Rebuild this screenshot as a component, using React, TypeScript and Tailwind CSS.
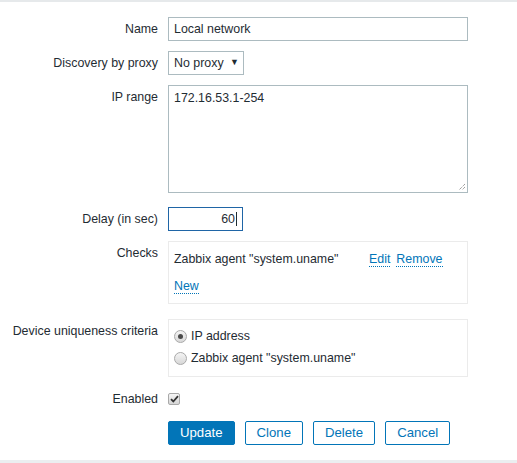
import React from 'react';

const font = { fontFamily: '"Liberation Sans", Arial, Helvetica, sans-serif' };

function Row({ label, children, labelClass = 'pt-[5px]' }: { label: string; children: React.ReactNode; labelClass?: string }) {
  return (
    <div className="flex items-start">
      <div className={`w-[158px] shrink-0 text-right text-[12.4px] leading-[14px] text-[#1f2c33] ${labelClass}`}>{label}</div>
      <div className="ml-[10px] flex-1">{children}</div>
    </div>
  );
}

function Radio({ checked, label }: { checked?: boolean; label: string }) {
  return (
    <div className="flex h-[22px] items-center">
      <span className="flex h-[13px] w-[13px] items-center justify-center rounded-full border border-[#a9a9a9] bg-gradient-to-b from-[#f4f4f4] to-[#d8d8d8]">
        {checked && <span className="h-[5px] w-[5px] rounded-full bg-[#4a4a4a]" />}
      </span>
      <span className="ml-[4px] text-[12.4px] leading-[14px] text-[#1f2c33]">{label}</span>
    </div>
  );
}

function Btn({ label, primary }: { label: string; primary?: boolean }) {
  return (
    <button
      className={
        primary
          ? 'h-[24px] rounded-[2px] border border-[#0275b8] bg-[#0275b8] px-[11px] text-[13.2px] text-white'
          : 'h-[24px] rounded-[2px] border border-[#0275b8] bg-white px-[11px] text-[13.2px] text-[#0275b8]'
      }
      style={font}
    >
      {label}
    </button>
  );
}

function Link({ children }: { children: React.ReactNode }) {
  return <span className="border-b border-dotted border-[#0275b8] text-[12.4px] leading-[14px] text-[#0275b8]">{children}</span>;
}

export default function App() {
  return (
    <div className="flex h-[463px] w-[517px] flex-col bg-white" style={font}>
      <div className="h-[2px] bg-[#e6e9eb]" />
      <div className="flex flex-1 flex-col pt-[15px]">
        <div className="flex flex-col gap-[10px]">
          <Row label="Name">
            <div className="flex h-[24px] w-[300px] items-center border border-[#acbbc0] px-[5px] text-[12.4px] text-[#1f2c33]">Local network</div>
          </Row>
          <Row label="Discovery by proxy">
            <div className="flex h-[24px] w-[76px] items-center justify-between border border-[#acbbc0] pl-[5px] pr-[4px] text-[12.4px] text-[#1f2c33]">
              <span>No proxy</span>
              <span className="text-[9px]">▼</span>
            </div>
          </Row>
          <Row label="IP range">
            <div className="relative h-[108px] w-[300px] border border-[#acbbc0] px-[5px] pt-[5px] text-[12.4px] leading-[14px] text-[#1f2c33]">
              172.16.53.1-254
              <svg className="absolute bottom-[1px] right-[1px]" width="9" height="9" viewBox="0 0 9 9">
                <path d="M8 2 L2 8 M8 5 L5 8" stroke="#777" strokeWidth="1" strokeDasharray="1 1" />
              </svg>
            </div>
          </Row>
        </div>
        <div className="mt-[14px] flex flex-col gap-[10px]">
          <Row label="Delay (in sec)">
            <div className="flex h-[24px] w-[75px] items-center justify-end border border-[#1f65a6] pr-[5px] text-[12.4px] text-[#1f2c33]">
              60<span className="ml-[1px] h-[14px] w-[1px] bg-[#1f2c33]" />
            </div>
          </Row>
          <Row label="Checks" labelClass="pt-[5px]">
            <div className="flex h-[63px] w-[300px] flex-col gap-[12px] border border-[#ebebeb] pl-[5px] pt-[10px] text-[12.4px] leading-[14px] text-[#1f2c33]">
              <div className="flex">
                <span className="w-[195px]">Zabbix agent "system.uname"</span>
                <Link>Edit</Link>
                <span className="ml-[6px]"><Link>Remove</Link></span>
              </div>
              <div>
                <Link>New</Link>
              </div>
            </div>
          </Row>
        </div>
        <div className="mt-[15px]">
          <Row label="Device uniqueness criteria" labelClass="pt-[5px]">
            <div className="flex h-[58px] w-[300px] flex-col border border-[#ebebeb] pl-[5px] pt-[5px]">
              <Radio checked label="IP address" />
              <Radio label={'Zabbix agent "system.uname"'} />
            </div>
          </Row>
        </div>
        <div className="mt-[10px]">
          <Row label="Enabled" labelClass="pt-[5px]">
            <div className="flex h-[24px] items-center">
              <span className="flex h-[12px] w-[12px] items-center justify-center rounded-[2px] border border-[#a9a9a9] bg-gradient-to-b from-[#f6f6f6] to-[#d6d6d6]">
                <svg width="9" height="8" viewBox="0 0 9 8">
                  <path d="M1 4.2 L3.3 6.5 L8 1.2" stroke="#333" strokeWidth="1.8" fill="none" />
                </svg>
              </span>
            </div>
          </Row>
        </div>
        <div className="mt-[10px] flex pl-[168px] gap-[10px]">
          <Btn primary label="Update" />
          <Btn label="Clone" />
          <Btn label="Delete" />
          <Btn label="Cancel" />
        </div>
      </div>
      <div className="h-[3px] bg-[#ebeef0]" />
    </div>
  );
}
